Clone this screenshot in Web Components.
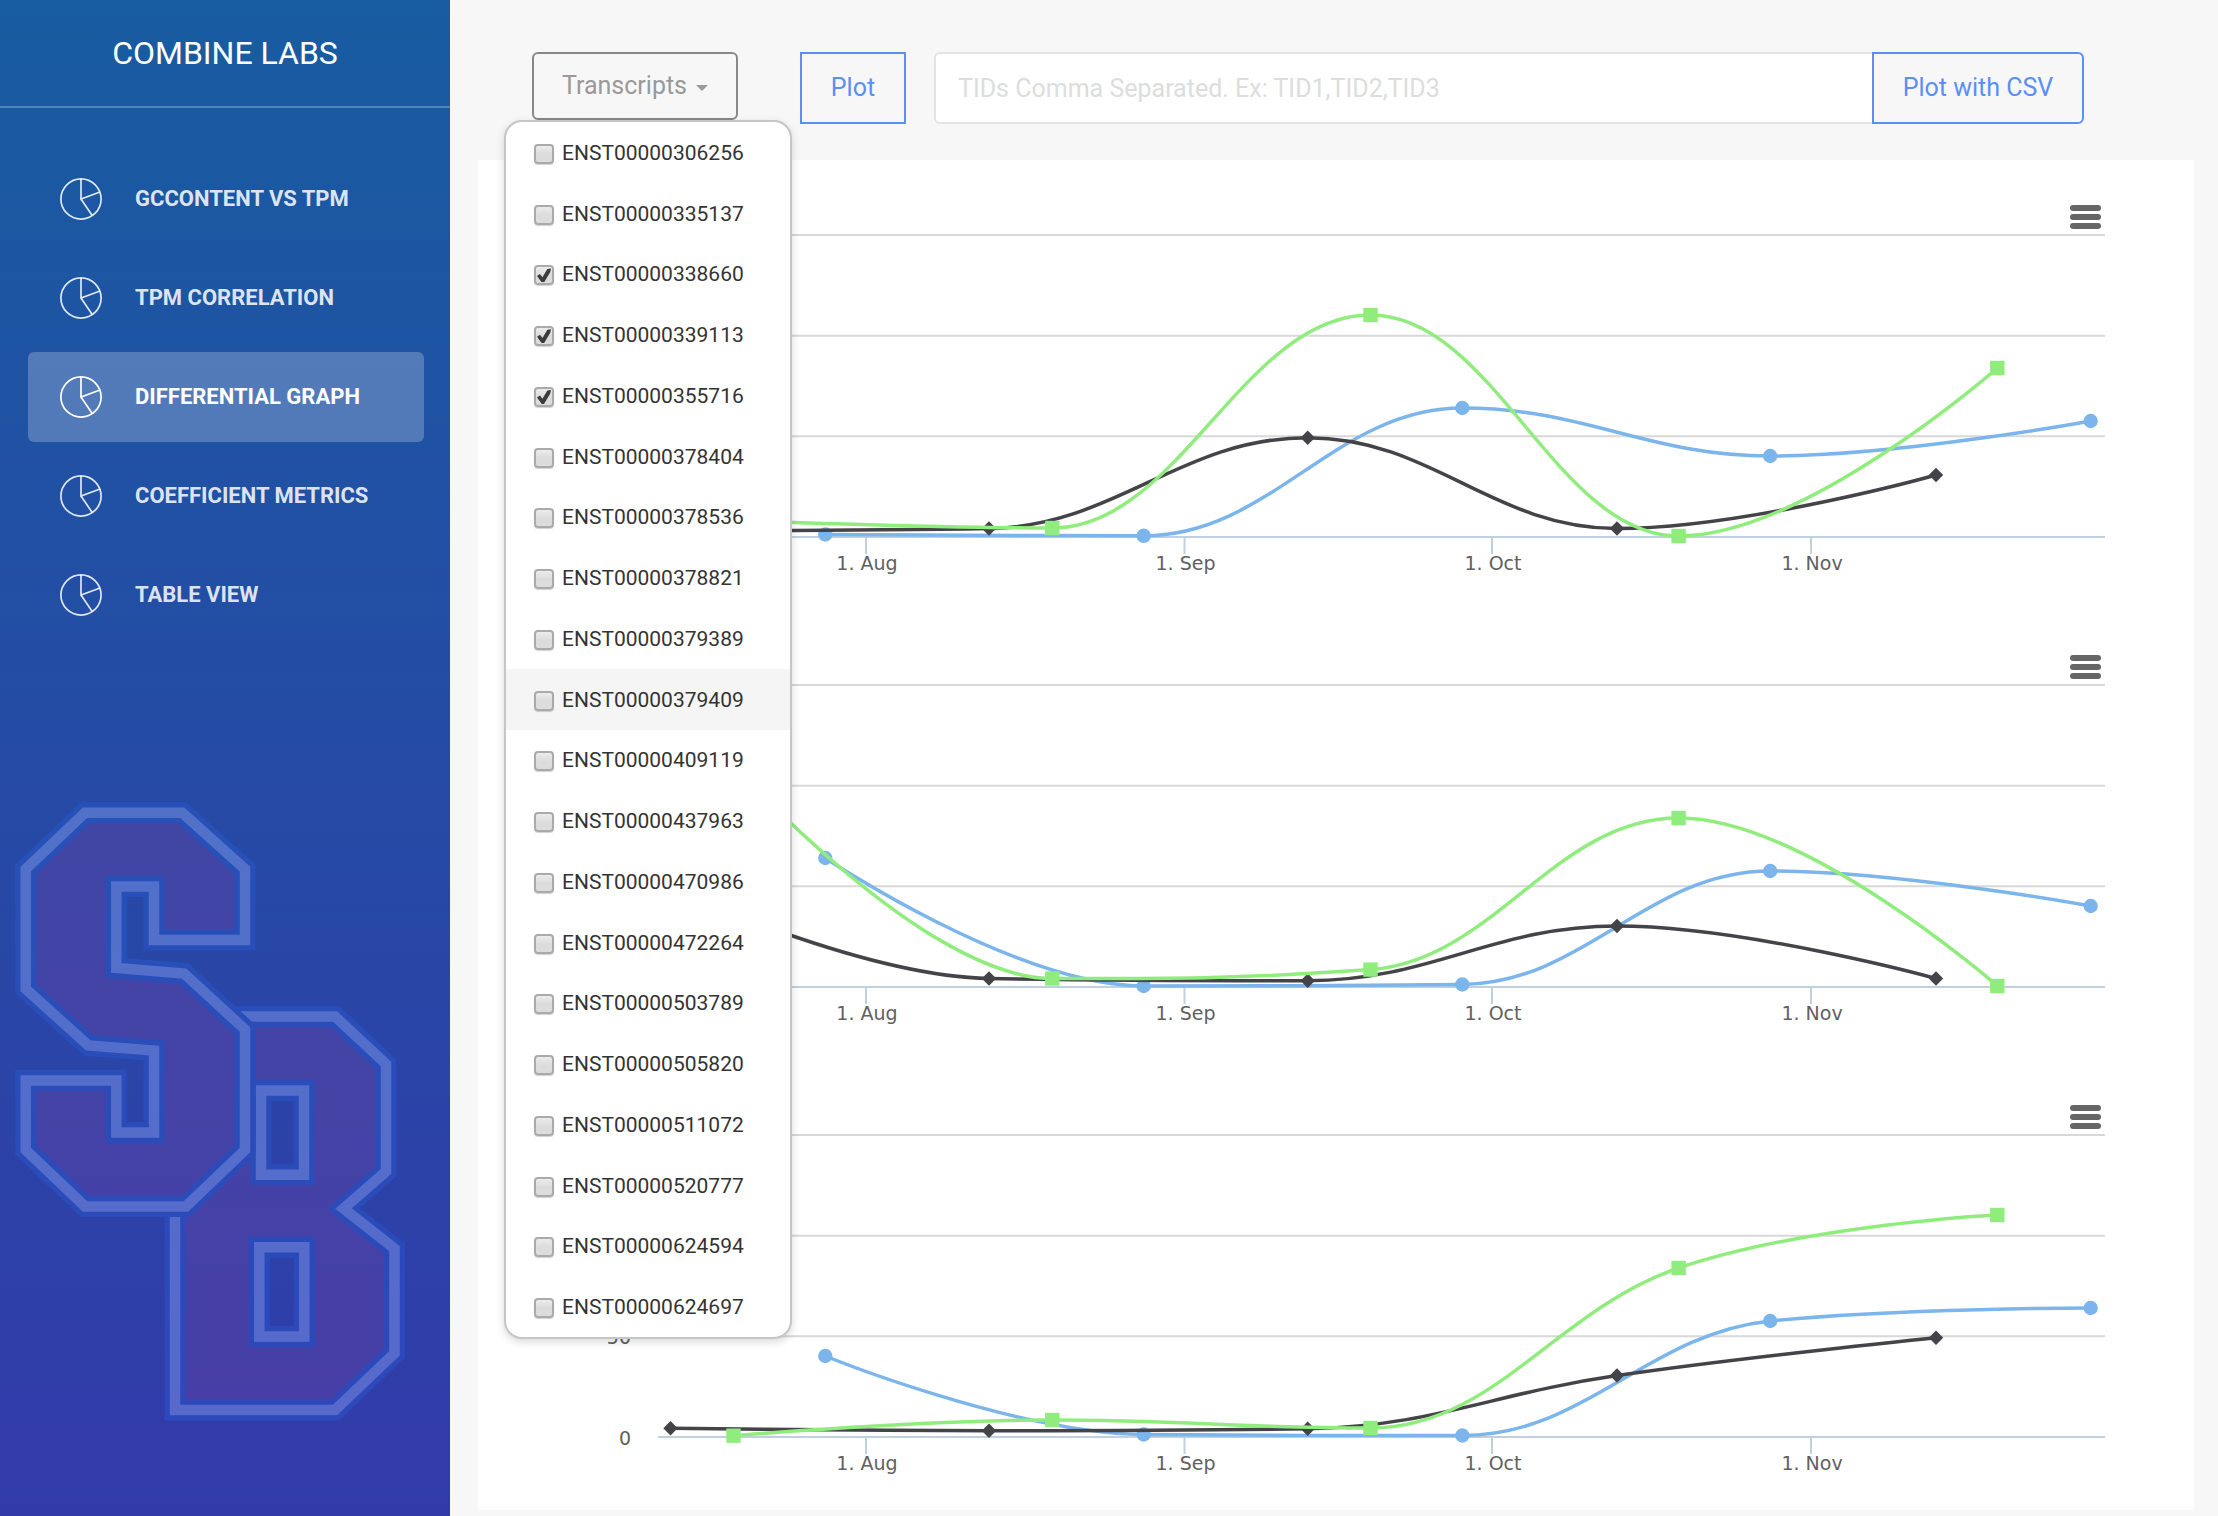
<!DOCTYPE html>
<html lang="en">
<head>
<meta charset="utf-8">
<title>Combine Labs</title>
<style>
  body { margin: 0; background: #f7f7f7; font-family: Roboto, "Liberation Sans", sans-serif; }
</style>
</head>
<body>
<labs-app></labs-app>
<script>
const IDS = ["306256","335137","338660","339113","355716","378404","378536","378821","379389","379409",
  "409119","437963","470986","472264","503789","505820","511072","520777","624594","624697"];
const CHECKED = new Set(["338660","339113","355716"]);

class LabsElement extends HTMLElement {
  constructor() {
    super();
    this.attachShadow({ mode: "open" });
  }
  connectedCallback() { this.shadowRoot.innerHTML = this.render(); }
}

/* One link of the side navigation */
class NavItem extends LabsElement {
  render() {
    return `<style>
      :host { display: block; }
      a { display: flex; align-items: center; gap: 33px; height: 90px; padding: 0 32px; border-radius: 6px;
          color: rgba(255,255,255,.86); text-decoration: none; font-size: 22px; font-weight: 700; line-height: 30px; white-space: nowrap; }
      :host([active]) a { color: #fff; background: rgba(255,255,255,.23); }
      svg { flex: none; width: 42px; height: 42px; fill: none; stroke: currentColor; stroke-width: 1.7; }
    </style>
    <a href="#"><svg viewBox="0 0 42 42" aria-hidden="true"><circle cx="21" cy="21" r="20.1"/><path d="M21 1V21L40 14M21 21L32.2 37.5"/></svg><slot></slot></a>`;
  }
}

/* Varsity letter emblem at the foot of the sidebar */
class LabsEmblem extends LabsElement {
  render() {
    const s = "M85 32.8H182.3L245 89.2V160H154V106.5H116.3V188L184 193.5L245 249.5V370L186 426.4H85L25.7 370V300.5H116.3V352.5H154V270.5L88.3 265.5L25.7 208.8V89.2Z";
    const b = "M175 236.5H335L386 284V391.5L343.5 428.5L394.5 468.5V573.3L335 630H175ZM261 310.6V394.8H304V310.6ZM259.3 467.2V556.4H304.3V467.2Z";
    const letter = d => `<path d="${d}" fill="#6a43a4" fill-rule="evenodd" stroke="#295bd4" stroke-width="21"/><path d="${d}" fill="none" stroke="#92adff" stroke-width="10.5"/>`;
    return `<style>:host { display: block; } svg { display: block; width: 100%; }</style>
      <svg viewBox="0 0 450 660" aria-hidden="true"><g opacity=".4">${letter(b)}${letter(s)}</g></svg>`;
  }
}

class LabsSidebar extends LabsElement {
  render() {
    return `<style>
      :host { display: flex; flex-direction: column; background: linear-gradient(#185ca1, #323aaa); }
      header { height: 106px; border-bottom: 2px solid rgba(255,255,255,.25); display: flex; align-items: center; justify-content: center;
               color: #fff; font-size: 32px; line-height: 40px; }
      nav { display: flex; flex-direction: column; gap: 9px; padding: 46px 26px 0 28px; }
      nav ::slotted(*) { flex: none; }
      labs-emblem { margin: auto 0 76px; }
    </style>
    <header><slot name="title"></slot></header>
    <nav><slot></slot></nav>
    <labs-emblem></labs-emblem>`;
  }
}

class CheckOption extends LabsElement {
  render() {
    return `<style>
      :host { display: flex; }
      :host([hovered]) { background: #f5f5f5; }
      label { flex: 1; display: flex; align-items: center; gap: 8px; padding: 1px 0 0 28px; font-size: 21px; line-height: 30px; color: #333; }
      input { appearance: none; box-sizing: border-box; width: 20px; height: 20px; margin: 2px 0 0; border: 2px solid #aaa; border-radius: 4px;
              background: linear-gradient(#ececec, #dcdcdc 50%); box-shadow: 0 1px 1px rgba(0,0,0,.18); display: grid; place-items: center; }
      input:checked::before { content: ""; width: 14px; height: 14px; background: #3c3c3c;
              clip-path: polygon(0 54%, 21% 41%, 39% 64%, 74% 5%, 100% 0, 95% 26%, 50% 100%, 34% 100%); }
    </style>
    <label><input type="checkbox" ${this.hasAttribute("checked") ? "checked" : ""}><span><slot></slot></span></label>`;
  }
}

class TranscriptPicker extends LabsElement {
  render() {
    return `<style>
      :host { display: block; position: relative; }
      button { box-sizing: border-box; display: flex; align-items: center; justify-content: center; gap: 9px; width: 206px; height: 68px; padding: 0; border: 2px solid #888;
               border-radius: 6px; background: transparent; color: #999; font: 25px/32px Roboto, "Liberation Sans", sans-serif; }
      i { margin-top: 4px; border: 6px solid transparent; border-top-color: currentColor; border-bottom: 0; }
      .menu { position: absolute; z-index: 2; left: -28px; top: 68px; box-sizing: border-box; width: 288px; height: 1219px; display: grid; grid-auto-rows: 1fr;
              border: 2px solid #c6c6c6; border-radius: 18px; background: #fff; background-clip: padding-box; box-shadow: 0 3px 8px rgba(0,0,0,.15); overflow: hidden; }
    </style>
    <button type="button" aria-expanded="true">Transcripts<i></i></button>
    <div class="menu">${IDS.map(id => `<check-option ${CHECKED.has(id) ? "checked" : ""} ${id === "379409" ? "hovered" : ""}>ENST00000${id}</check-option>`).join("")}</div>`;
  }
}

class PlotToolbar extends LabsElement {
  render() {
    return `<style>
      :host { display: flex; align-items: flex-start; box-sizing: border-box; height: 160px; padding: 52px 134px 0 82px; }
      .plot, .csv { box-sizing: border-box; height: 72px; padding: 0; border: 2px solid #5a8ff5; background: transparent; color: #5a8ff5; }
      button, input { font: 25px/32px Roboto, "Liberation Sans", sans-serif; }
      .plot { width: 106px; margin: 0 28px 0 62px; }
      form { flex: 1; display: flex; }
      input { flex: 1; min-width: 0; box-sizing: border-box; height: 72px; padding: 0 22px; border: 2px solid #e3e3e3; border-right: 0; border-radius: 6px 0 0 6px; background: #fff; }
      input::placeholder { color: #ddd; opacity: 1; }
      .csv { width: 212px; border-radius: 0 6px 6px 0; }
    </style>
    <transcript-picker></transcript-picker>
    <button class="plot" type="button">Plot</button>
    <form><input type="text" aria-label="Transcript IDs" placeholder="TIDs Comma Separated. Ex: TID1,TID2,TID3"><button class="csv" type="button">Plot with CSV</button></form>`;
  }
}

const BASE = 307;
const GRID = [5, 105.7, 206.3];
const TICKS = [[388, "1. Aug"], [706.5, "1. Sep"], [1014, "1. Oct"], [1333, "1. Nov"]];
const SERIES_X = {
  blue:  [347.3, 665.7, 984.3, 1292.2, 1612.7],
  dark:  [192.5, 511, 829.7, 1139, 1458],
  green: [255.5, 574.3, 892.5, 1200.6, 1519.3]
};
const COLORS = { blue: "#7cb5ec", dark: "#434348", green: "#90ed7d" };

/* Smooth curve through the points that never overshoots a neighbour */
function spline(p) {
  const K = 1.5, D = 2.5;
  let out = `M${p[0].x} ${p[0].y}`, right = p[0];
  for (let i = 1; i < p.length; i++) {
    const a = p[i - 1], c = p[i], n = p[i + 1];
    let l = { ...c }, r = { ...c };
    if (n) {
      l = { x: (K * c.x + a.x) / D, y: (K * c.y + a.y) / D };
      r = { x: (K * c.x + n.x) / D, y: (K * c.y + n.y) / D };
      const fix = (r.y - l.y) * (r.x - c.x) / (r.x - l.x) + c.y - r.y;
      l.y += fix; r.y += fix;
      if (l.y > a.y && l.y > c.y) { l.y = Math.max(a.y, c.y); r.y = 2 * c.y - l.y; }
      else if (l.y < a.y && l.y < c.y) { l.y = Math.min(a.y, c.y); r.y = 2 * c.y - l.y; }
      if (r.y > n.y && r.y > c.y) { r.y = Math.max(n.y, c.y); l.y = 2 * c.y - r.y; }
      else if (r.y < n.y && r.y < c.y) { r.y = Math.min(n.y, c.y); l.y = 2 * c.y - r.y; }
    }
    out += `C${right.x} ${right.y} ${l.x} ${l.y} ${c.x} ${c.y}`;
    right = r;
  }
  return out;
}

const MARK = {
  blue: p => `<circle cx="${p.x}" cy="${p.y}" r="7.2"/>`,
  dark: p => `<path d="M${p.x} ${p.y - 7.2}l7.2 7.2l-7.2 7.2l-7.2-7.2z"/>`,
  green: p => `<rect x="${p.x - 7.2}" y="${p.y - 7.2}" width="14.4" height="14.4"/>`
};

class SeriesChart extends LabsElement {
  render() {
    const series = ["blue", "dark", "green"].map(k => {
      const h = this.getAttribute(k).split(",").map(Number);
      const pts = h.map((v, i) => ({ x: SERIES_X[k][i], y: BASE - v }));
      return `<path d="${spline(pts)}" fill="none" stroke="${COLORS[k]}" stroke-width="3.5" stroke-linecap="round"/><g fill="${COLORS[k]}">${pts.map(MARK[k]).join("")}</g>`;
    }).join("");
    const levels = (this.getAttribute("levels") || "").split(",").filter(Boolean);
    return `<style>
      :host { display: block; }
      header { display: flex; justify-content: flex-end; box-sizing: border-box; height: 70px; padding: 41px 89px 0 0; }
      button { box-sizing: border-box; width: 39px; height: 32px; padding: 4px; border: 0; background: transparent; display: flex; flex-direction: column; gap: 3px; }
      b { flex: none; height: 6px; width: 31px; border-radius: 3px; background: #666; }
      svg { display: block; width: 100%; overflow: visible; }
      text { font: 19px "DejaVu Sans", sans-serif; fill: #606060; }
    </style>
    <header><button type="button" aria-label="Chart menu"><b></b><b></b><b></b></button></header>
    <svg viewBox="0 0 1716 380">
      <g stroke="#d8d8d8" stroke-width="2">${GRID.map(y => `<path d="M180 ${y}H1627"/>`).join("")}</g>
      <g stroke="#c0d0e0" stroke-width="2"><path d="M180 ${BASE}H1627"/>${TICKS.map(t => `<path d="M${t[0]} ${BASE}v17"/>`).join("")}</g>
      ${series}
      <g text-anchor="middle">${TICKS.map(t => `<text x="${t[0] + 1}" y="340">${t[1]}</text>`).join("")}</g>
      <g text-anchor="end">${levels.map((t, i) => `<text x="153" y="${315 - i * 101}">${t}</text>`).join("")}</g>
    </svg>`;
  }
}

class LabsApp extends LabsElement {
  render() {
    return `<style>
      :host { display: grid; grid-template-columns: 450px minmax(0, 1fr); min-height: 100vh; }
      .charts { margin: 0 24px 6px 28px; background: #fff; }
    </style>
    <labs-sidebar>
      <span slot="title">COMBINE LABS</span>
      <nav-item>GCCONTENT VS TPM</nav-item>
      <nav-item>TPM CORRELATION</nav-item>
      <nav-item active>DIFFERENTIAL GRAPH</nav-item>
      <nav-item>COEFFICIENT METRICS</nav-item>
      <nav-item>TABLE VIEW</nav-item>
    </labs-sidebar>
    <main>
      <plot-toolbar></plot-toolbar>
      <section class="charts">
        <series-chart blue="2.5,1.2,129,81,116" dark="6.3,8.5,99.3,8.5,62" green="17,9,222,1,169"></series-chart>
        <series-chart blue="129,1,2.5,116,81" dark="99.3,8.5,6.3,61,8.5" green="222,8.5,17.4,169,1"></series-chart>
        <series-chart levels="0,50" blue="81,2.5,1.5,116,129" dark="8.7,6.3,8.3,61.5,99.3" green="1.3,17,9,169,222"></series-chart>
      </section>
    </main>`;
  }
}

for (const [name, cls] of Object.entries({
  "nav-item": NavItem, "labs-emblem": LabsEmblem, "labs-sidebar": LabsSidebar, "check-option": CheckOption,
  "transcript-picker": TranscriptPicker, "plot-toolbar": PlotToolbar, "series-chart": SeriesChart, "labs-app": LabsApp
})) customElements.define(name, cls);
</script>
</body>
</html>
